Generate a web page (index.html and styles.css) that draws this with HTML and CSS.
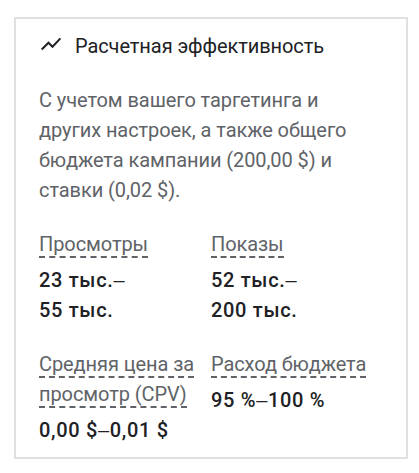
FILE: index.html
```html
<!DOCTYPE html>
<html lang="ru">
<head>
    <meta charset="UTF-8">
    <meta name="viewport" content="width=device-width, initial-scale=1.0">
    <title>Расчетная эффективность</title>
    <link rel="stylesheet" href="styles.css">
</head>
<body>
    <div class="card">
        <div class="header">
            <svg class="icon" width="24" height="24" viewBox="0 0 24 24">
                <path d="M2.7 15.5L9.5 8.7l4 4L21.4 4.4"/>
            </svg>
            <h2 class="title">Расчетная эффективность</h2>
        </div>
        <p class="description">С учетом вашего таргетинга и<br>других настроек, а также общего<br>бюджета кампании (200,00 $) и<br>ставки (0,02 $).</p>
        <div class="metrics">
            <div class="metric">
                <div><span class="label">Просмотры</span></div>
                <div class="value">23 тыс.<span class="dash">–</span><br>55 тыс.</div>
            </div>
            <div class="metric">
                <div><span class="label">Показы</span></div>
                <div class="value">52 тыс.<span class="dash">–</span><br>200 тыс.</div>
            </div>
            <div class="metric">
                <div><span class="label">Средняя цена за<br>просмотр (CPV)</span></div>
                <div class="value">0,00 $<span class="dash">–</span>0,01 $</div>
            </div>
            <div class="metric">
                <div><span class="label">Расход бюджета</span></div>
                <div class="value">95 %<span class="dash">–</span>100 %</div>
            </div>
        </div>
    </div>
</body>
</html>
```
FILE: styles.css
```css
* {
    box-sizing: border-box;
}
body {
    margin: 0;
    padding: 17px 11px 14px 14px;
    background-color: #fff;
    font-family: Roboto, "Noto Sans", sans-serif;
    font-size: 20px;
    line-height: 30px;
    letter-spacing: -0.08px;
}
.card {
    height: 442px;
    padding: 12px 23px 0;
    border: 2px solid #e0e0e0;
}
.header {
    display: flex;
    align-items: center;
    gap: 12px;
    height: 30px;
}
.icon {
    fill: none;
    stroke: #202124;
    stroke-width: 2;
}
.title {
    margin: 0;
    color: #202124;
    font-size: 20px;
    font-weight: 400;
}
.description {
    margin: 24px 0;
    color: #5f6368;
    white-space: nowrap;
}
.metrics {
    display: grid;
    grid-template-columns: 172px 1fr;
    row-gap: 24px;
}
.metric {
    white-space: nowrap;
}
.label {
    border-bottom: 2px dashed #5f6368;
    color: #5f6368;
}
.value {
    margin-top: 6px;
    color: #202124;
    font-weight: 500;
    letter-spacing: 0.68px;
}
.dash {
    font-family: "Liberation Sans", Arial, sans-serif;
    font-weight: 400;
    line-height: 1;
}
```
